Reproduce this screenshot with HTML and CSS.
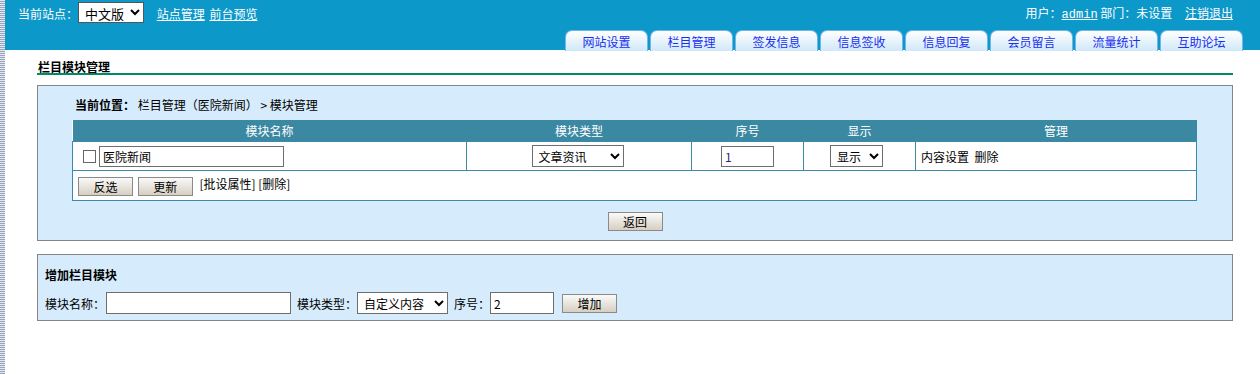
FILE: index.html
```html
<!DOCTYPE html>
<html lang="zh-CN">
<head>
    <meta charset="UTF-8">
    <title>栏目模块管理</title>
    <link rel="stylesheet" href="styles.css">
</head>
<body>
    <div class="page">
        <div class="top">
            <div class="top-row">
                <div class="site">
                    当前站点：<select class="site-select">
                        <option>中文版</option>
                    </select>
                    <a href="#" class="top-link">站点管理</a>
                    <a href="#" class="top-link">前台预览</a>
                </div>
                <div class="user">
                    用户：<a href="#" class="user-name">admin</a> 部门：未设置
                    <a href="#" class="top-link logout">注销退出</a>
                </div>
            </div>
            <div class="tabs">
                <a href="#" class="tab">网站设置</a>
                <a href="#" class="tab">栏目管理</a>
                <a href="#" class="tab">签发信息</a>
                <a href="#" class="tab">信息签收</a>
                <a href="#" class="tab">信息回复</a>
                <a href="#" class="tab">会员留言</a>
                <a href="#" class="tab">流量统计</a>
                <a href="#" class="tab">互助论坛</a>
            </div>
        </div>

        <div class="content">
            <h2 class="page-title">栏目模块管理</h2>

            <div class="panel panel-list">
                <div class="location"><b>当前位置：</b> 栏目管理（医院新闻） &gt; 模块管理</div>
                <table class="grid">
                    <tr class="grid-head">
                        <th class="col-name">模块名称</th>
                        <th class="col-type">模块类型</th>
                        <th class="col-order">序号</th>
                        <th class="col-show">显示</th>
                        <th class="col-admin">管理</th>
                    </tr>
                    <tr class="grid-row">
                        <td class="cell-name">
                            <input type="checkbox" class="check"><input type="text" class="txt txt-name" value="医院新闻">
                        </td>
                        <td class="center">
                            <select class="sel sel-type">
                                <option>文章资讯</option>
                            </select>
                        </td>
                        <td class="center">
                            <input type="text" class="txt txt-order" value="1">
                        </td>
                        <td class="center">
                            <select class="sel sel-show">
                                <option>显示</option>
                            </select>
                        </td>
                        <td class="cell-admin">内容设置&nbsp; 删除</td>
                    </tr>
                    <tr class="grid-foot">
                        <td colspan="5">
                            <button type="button" class="btn">反选</button>
                            <button type="button" class="btn">更新</button>
                            <span class="batch">[批设属性]&nbsp;[删除]</span>
                        </td>
                    </tr>
                </table>
                <div class="back">
                    <button type="button" class="btn">返回</button>
                </div>
            </div>

            <div class="panel panel-add">
                <div class="add-title">增加栏目模块</div>
                <form class="add-form">
                    <label>模块名称：</label>
                    <input type="text" class="txt add-name">
                    <label class="gap">模块类型：</label>
                    <select class="sel add-type">
                        <option>自定义内容</option>
                    </select>
                    <label class="gap">序号：</label>
                    <input type="text" class="txt add-order" value="2">
                    <button type="button" class="btn">增加</button>
                </form>
            </div>
        </div>
    </div>
</body>
</html>
```

FILE: styles.css
```css
html {
    background: #fff;
}

body {
    margin: 0;
    min-height: 374px;
    font-family: "Noto Sans CJK SC", "Liberation Sans", sans-serif;
    font-size: 12px;
    color: #000;
    background: repeating-linear-gradient(to bottom, #e4e8f0 0, #e4e8f0 1px, #98a4bc 1px, #98a4bc 2px) left top / 5px 100% no-repeat;
}

.page {
    margin-left: 5px;
}

/* header */
.top {
    height: 50px;
    background-color: #0d98ca;
    display: flex;
    flex-direction: column;
    justify-content: space-between;
    color: #fff;
}

.top-row {
    display: flex;
    justify-content: space-between;
    align-items: center;
    height: 25px;
    padding-left: 13px;
    padding-right: 27px;
}

.site-select {
    font-family: inherit;
    font-size: 13px;
    height: 21px;
    width: 66px;
    margin: 0 8px 0 0;
    border: 1px solid #555;
    border-radius: 0;
    background: #fff;
    color: #000;
    padding: 0 2px;
}

.top-link {
    color: #fff;
    text-decoration: underline;
    margin-left: 2px;
}

.user-name {
    color: #fff;
    font-family: "Liberation Mono", monospace;
    font-size: 12px;
}

.logout {
    margin-left: 10px;
}

.tabs {
    display: flex;
    gap: 2px;
    padding-left: 560px;
    height: 20px;
}

.tab {
    width: 81px;
    height: 20px;
    border: 1px solid #6fb6ec;
    border-bottom: none;
    border-radius: 7px 7px 0 0;
    background: linear-gradient(to bottom, #ffffff, #cfe8f8);
    color: #1a2ef0;
    text-decoration: none;
    text-align: center;
    line-height: 21px;
}

/* content */
.content {
    margin-left: 32px;
    width: 1196px;
}

.page-title {
    margin: 0;
    padding-top: 11px;
    font-size: 12px;
    line-height: 12px;
    border-bottom: 2px solid #008a66;
    padding-left: 1px;
}

.panel {
    border: 1px solid #858585;
    background-color: #d6ebfb;
}

.panel-list {
    margin-top: 10px;
    height: 154px;
    padding-left: 34px;
}

.location {
    padding-top: 12px;
    padding-left: 3px;
    line-height: 14px;
    margin-bottom: 8px;
}

.grid {
    border-collapse: collapse;
    width: 1125px;
    background: #fff;
}

.grid td {
    border: 1px solid #3a8aa8;
    padding: 0;
}

.grid-head th {
    background-color: #3b88a3;
    color: #fff;
    font-weight: normal;
    height: 21px;
    padding: 0;
}

.col-name { width: 394px; }
.col-type { width: 225px; }
.col-order { width: 112px; }
.col-show { width: 112px; }

.grid-row td {
    height: 28px;
}

.cell-name {
    padding-left: 8px !important;
}

.center {
    text-align: center;
}

.cell-admin {
    padding-left: 5px !important;
}

.check {
    width: 13px;
    height: 13px;
    margin: 0 3px 0 2px;
    vertical-align: middle;
    appearance: none;
    border: 1px solid #666;
    background: #fff;
}

.txt {
    font-family: inherit;
    font-size: 12px;
    height: 21px;
    box-sizing: border-box;
    border: 1px solid #6e6e6e;
    background: #fff;
    padding: 0 3px;
    vertical-align: middle;
}

.txt-name {
    width: 185px;
}

.txt-order {
    width: 53px;
    color: #1c2a7a;
}

.sel {
    font-family: inherit;
    font-size: 12px;
    height: 22px;
    border: 1px solid #6e6e6e;
    border-radius: 0;
    background: #fff;
    vertical-align: middle;
    padding: 0 2px;
}

.sel-type {
    width: 92px;
    margin-right: 3px;
}

.sel-show {
    width: 53px;
    margin-right: 6px;
}

.grid-foot td {
    height: 29px;
    padding-left: 5px;
}

.btn {
    font-family: inherit;
    font-size: 12px;
    height: 19px;
    width: 55px;
    padding: 0;
    border: 1px solid #8a8a8a;
    background: linear-gradient(to bottom, #fafafa, #d6cfc0);
    color: #000;
    vertical-align: middle;
}

.grid-foot .btn + .btn {
    margin-left: 2px;
}

.batch {
    margin-left: 4px;
}

.back {
    text-align: center;
    margin-top: 10px;
}

.back .btn {
    margin-left: -34px;
}

.panel-add {
    margin-top: 13px;
    height: 65px;
    padding-left: 7px;
}

.add-title {
    font-weight: bold;
    padding-top: 13px;
    line-height: 14px;
}

.add-form {
    display: flex;
    align-items: center;
    margin: 10px 0 0;
}

.add-form label {
    white-space: nowrap;
}

.add-form .gap {
    margin-left: 6px;
}

.add-name {
    width: 185px;
    height: 22px;
    margin-left: 1px;
}

.add-type {
    width: 91px;
}

.add-order {
    width: 64px;
    height: 22px;
}

.add-form .btn {
    margin-left: 8px;
}
```
